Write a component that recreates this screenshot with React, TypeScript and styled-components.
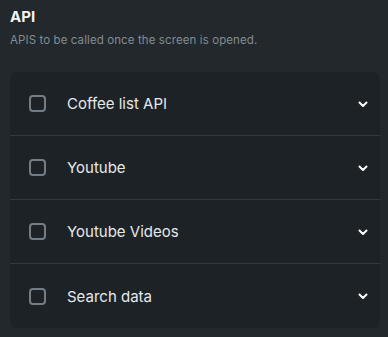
import styled, { createGlobalStyle } from "styled-components";

const GlobalStyle = createGlobalStyle`
  html, body {
    margin: 0;
    padding: 0;
    background: #22282b;
  }
  body {
    font-family: "Inter", "DejaVu Sans", sans-serif;
  }
`;

const Section = styled.div`
  padding: 8px 8px 0 10px;
  width: 388px;
  height: 337px;
  box-sizing: border-box;
  background: #22282b;
`;

const Title = styled.h2`
  margin: 0;
  font-size: 15px;
  font-weight: 700;
  color: #f1f3f4;
  line-height: 18px;
`;

const Subtitle = styled.p`
  margin: 7px 0 0 0;
  font-size: 11.5px;
  letter-spacing: 0.1px;
  color: #838c93;
  line-height: 14px;
`;

const Card = styled.div`
  margin-top: 25px;
  width: 370px;
  background: #1c2226;
  border-radius: 8px;
  display: flex;
  flex-direction: column;
`;

const Row = styled.div<{ $last?: boolean }>`
  display: flex;
  align-items: center;
  height: ${(p) => (p.$last ? 64 : 63)}px;
  padding: 0 11px 0 19px;
  border-bottom: ${(p) => (p.$last ? "none" : "1px solid #31393d")};
`;

const Checkbox = styled.span`
  width: 13px;
  height: 13px;
  border: 2px solid #727d86;
  border-radius: 4px;
  flex-shrink: 0;
`;

const Label = styled.span`
  margin-left: 21px;
  flex: 1;
  font-size: 15px;
  color: #e6e9eb;
`;

const Chevron = () => (
  <svg width="12" height="12" viewBox="0 0 12 12" fill="none">
    <path d="M2.5 4.5 L6 8 L9.5 4.5" stroke="#ffffff" strokeWidth="2" strokeLinecap="round" strokeLinejoin="round" />
  </svg>
);

const apis = ["Coffee list API", "Youtube", "Youtube Videos", "Search data"];

export default function App() {
  return (
    <>
      <GlobalStyle />
      <Section>
        <Title>API</Title>
        <Subtitle>APIS to be called once the screen is opened.</Subtitle>
        <Card>
          {apis.map((name, i) => (
            <Row key={name} $last={i === apis.length - 1}>
              <Checkbox />
              <Label>{name}</Label>
              <Chevron />
            </Row>
          ))}
        </Card>
      </Section>
    </>
  );
}
